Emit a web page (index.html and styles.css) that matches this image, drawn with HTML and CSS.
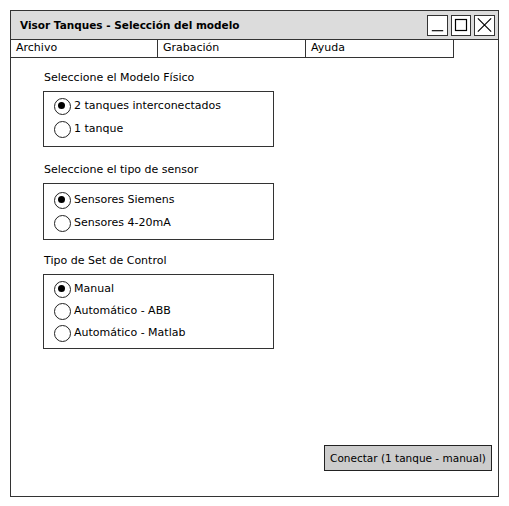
FILE: index.html
```html
<!DOCTYPE html>
<html>
<head>
<meta charset="utf-8">
<link rel="stylesheet" href="styles.css">
</head>
<body>
<div class="window">
  <div class="titlebar">
    <span class="title">Visor Tanques - Selección del modelo</span>
    <div class="winbtns">
      <span class="wbtn"><svg width="20" height="20" viewBox="0 0 20 20"><path d="M4 16 H16" stroke="#000" stroke-width="1.2"/></svg></span>
      <span class="wbtn"><svg width="18" height="20" viewBox="0 0 18 20"><rect x="3.5" y="4.5" width="11" height="11" fill="none" stroke="#000" stroke-width="1.2"/></svg></span>
      <span class="wbtn"><svg width="20" height="20" viewBox="0 0 20 20"><path d="M3 3 L17 17 M17 3 L3 17" stroke="#000" stroke-width="1.2"/></svg></span>
    </div>
  </div>
  <div class="menubar">
    <div class="menu">Archivo</div>
    <div class="menu">Grabación</div>
    <div class="menu">Ayuda</div>
  </div>
  <div class="content">
    <div class="group g1">
      <div class="label">Seleccione el Modelo Físico</div>
      <div class="box">
        <div class="radio on">2 tanques interconectados</div>
        <div class="radio">1 tanque</div>
      </div>
    </div>
    <div class="group g2">
      <div class="label">Seleccione el tipo de sensor</div>
      <div class="box">
        <div class="radio on">Sensores Siemens</div>
        <div class="radio">Sensores 4-20mA</div>
      </div>
    </div>
    <div class="group g3">
      <div class="label">Tipo de Set de Control</div>
      <div class="box">
        <div class="radio on">Manual</div>
        <div class="radio">Automático - ABB</div>
        <div class="radio">Automático - Matlab</div>
      </div>
    </div>
    <div class="actions">
      <button class="btn">Conectar (1 tanque - manual)</button>
    </div>
  </div>
</div>
</body>
</html>
```

FILE: styles.css
```css
* { box-sizing: border-box; }
html, body { margin: 0; padding: 0; background: #fff; }
body {
  font-family: "DejaVu Sans", "Liberation Sans", sans-serif;
  font-size: 11px;
  color: #000;
}
.window {
  margin: 10px 0 0 10px;
  width: 489px;
  height: 487px;
  border: 1.5px solid #333;
  display: flex;
  flex-direction: column;
}
.titlebar {
  height: 29px;
  background: #dcdcdc;
  border-bottom: 1.5px solid #333;
  display: flex;
  align-items: center;
  padding-left: 9px;
  padding-right: 3px;
}
.title {
  font-weight: bold;
  font-size: 10.5px;
  flex: 1;
}
.winbtns { display: flex; gap: 3px; }
.wbtn {
  display: flex;
  align-items: center;
  justify-content: center;
  height: 21px;
  width: 21px;
  border: 1px solid #333;
  background: #fff;
}
.wbtn:nth-child(2) { width: 20px; }
.menubar {
  display: flex;
  height: 18px;
}
.menu {
  width: 148px;
  border-right: 1.5px solid #333;
  border-bottom: 1.5px solid #333;
  padding-left: 5px;
  line-height: 16px;
  font-size: 11px;
}
.menu:first-child { width: 147px; }
.content {
  flex: 1;
  display: flex;
  flex-direction: column;
  padding: 13px 0 0 32px;
}
.label { margin-left: 1px; line-height: 14px; margin-bottom: 6px; }
.box {
  width: 231px;
  border: 1.5px solid #333;
  padding: 2px 0 6px 9px;
}
.g1 { margin-bottom: 16px; }
.g2 { margin-bottom: 14px; }
.g2 .box { padding-top: 4px; padding-bottom: 5px; }
.g3 .box { padding-top: 2px; padding-bottom: 5px; }
.radio {
  position: relative;
  display: flex;
  align-items: center;
  height: 23px;
  padding-left: 21px;
}
.g3 .radio { height: 22px; }
.radio::before {
  content: "";
  position: absolute;
  left: 1px;
  top: 50%;
  width: 15px;
  height: 15px;
  margin-top: -7.5px;
  border: 1.3px solid #222;
  border-radius: 50%;
  background: #fff;
}
.radio.on::after {
  content: "";
  position: absolute;
  left: 5px;
  top: 50%;
  width: 7px;
  height: 7px;
  margin-top: -3.5px;
  border-radius: 50%;
  background: #000;
}
.actions {
  margin-top: auto;
  display: flex;
  justify-content: flex-end;
  padding: 0 6px 25px 0;
}
.btn {
  font-family: inherit;
  font-size: 10.5px;
  white-space: nowrap;
  background: #cccccc;
  border: 1.5px solid #222;
  width: 168px;
  height: 26px;
  padding: 0;
  color: #000;
}
```
